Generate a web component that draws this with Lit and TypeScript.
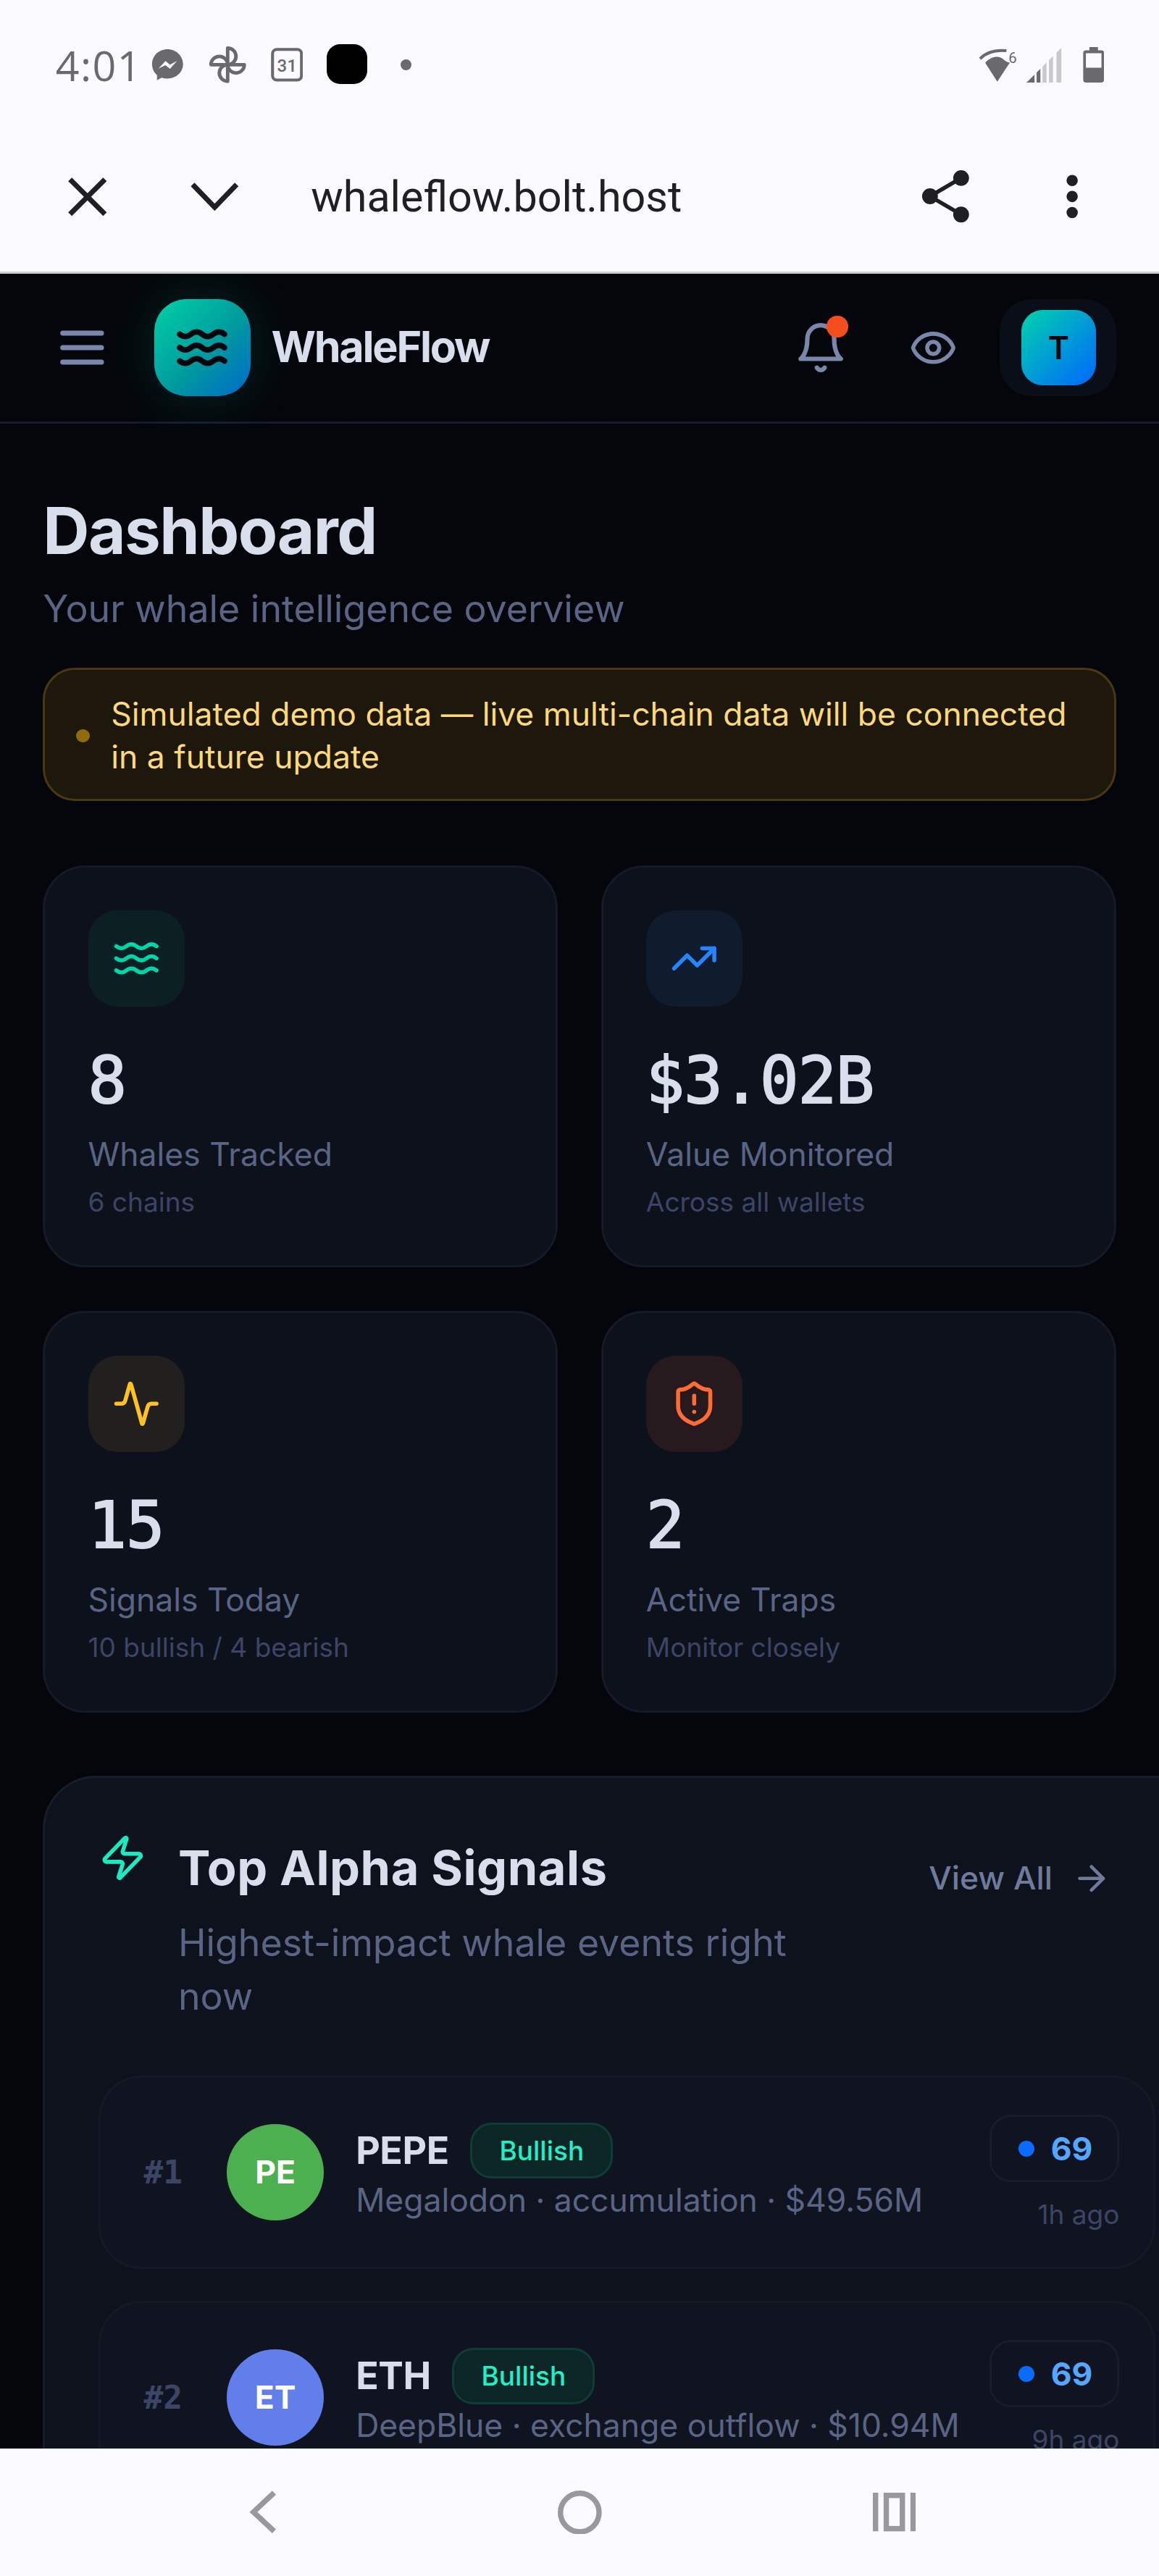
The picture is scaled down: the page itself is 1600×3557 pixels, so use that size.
import { LitElement, html, css, svg } from "lit";
import { customElement } from "lit/decorators.js";

const wavePaths = svg`
  <path d="M2 6c.6.5 1.2 1 2.5 1C7 7 7 5 9.5 5c2.6 0 2.4 2 5 2 2.5 0 2.5-2 5-2 1.3 0 1.9.5 2.5 1" />
  <path d="M2 12c.6.5 1.2 1 2.5 1 2.5 0 2.5-2 5-2 2.6 0 2.4 2 5 2 2.5 0 2.5-2 5-2 1.3 0 1.9.5 2.5 1" />
  <path d="M2 18c.6.5 1.2 1 2.5 1 2.5 0 2.5-2 5-2 2.6 0 2.4 2 5 2 2.5 0 2.5-2 5-2 1.3 0 1.9.5 2.5 1" />`;

const lucide = (size: number, body: unknown) => html`
  <svg class="lucide" width=${size} height=${size} viewBox="0 0 24 24">${body}</svg>`;

const stats = [
  {
    tone: "teal", value: "8", label: "Whales Tracked", sub: "6 chains",
    icon: wavePaths,
  },
  {
    tone: "blue", value: "$3.02B", label: "Value Monitored", sub: "Across all wallets",
    icon: svg`<path d="M22 7l-8.5 8.5-5-5L2 17" /><path d="M16 7h6v6" />`,
  },
  {
    tone: "amber", value: "15", label: "Signals Today", sub: "10 bullish / 4 bearish",
    icon: svg`<path d="M22 12h-2.48a2 2 0 0 0-1.93 1.46l-2.35 8.36a.25.25 0 0 1-.48 0L9.24 2.18a.25.25 0 0 0-.48 0l-2.35 8.36A2 2 0 0 1 4.49 12H2" />`,
  },
  {
    tone: "red", value: "2", label: "Active Traps", sub: "Monitor closely",
    icon: svg`<path d="M20 13c0 5-3.5 7.5-7.66 8.95a1 1 0 0 1-.67-.01C7.5 20.5 4 18 4 13V6a1 1 0 0 1 1-1c2 0 4.5-1.2 6.24-2.72a1.17 1.17 0 0 1 1.52 0C14.51 3.81 17 5 19 5a1 1 0 0 1 1 1z" /><path d="M12 8v4" /><path d="M12 16h.01" />`,
  },
];

const signals = [
  { rank: "#1", mark: "PE", coin: "pe", name: "PEPE", meta: "Megalodon · accumulation · $49.56M", score: "69", time: "1h ago" },
  { rank: "#2", mark: "ET", coin: "et", name: "ETH", meta: "DeepBlue · exchange outflow · $10.94M", score: "69", time: "9h ago" },
];

@customElement("app-root")
export class AppRoot extends LitElement {
  static styles = css`
    :host {
      display: block;
      width: 1600px;
      height: 3557px;
      overflow: hidden;
      background: #fbfaff;
    }
    * { box-sizing: border-box; }
    .page {
      zoom: 3.7037;
      width: 432px;
      height: 960.4px;
      display: flex;
      flex-direction: column;
      overflow: hidden;
      font-family: Inter, "Noto Sans", sans-serif;
      background: #fbfaff;
    }
    .lucide {
      display: block;
      flex: none;
      fill: none;
      stroke: currentColor;
      stroke-width: 2;
      stroke-linecap: round;
      stroke-linejoin: round;
    }

    /* phone chrome */
    .status {
      flex: none;
      height: 48.4px;
      padding: 0 20.4px 0 20.7px;
      display: flex;
      align-items: center;
      justify-content: space-between;
      color: #69696e;
    }
    .status-left, .status-right { display: flex; align-items: center; }
    .status-left { gap: 9px; }
    .status-right { gap: 3px; }
    .time {
      font-family: "Open Sans", Roboto, sans-serif;
      font-size: 15.5px;
      line-height: 20px;
      width: 30px;
      margin-right: -3.6px;
      letter-spacing: .4px;
    }
    .status svg { display: block; flex: none; }
    .blob { width: 15px; height: 15px; margin-top: -.5px; border-radius: 5px; background: #000; }
    .dot-small { width: 4px; height: 4px; border-radius: 50%; background: #69696e; margin-left: 3.5px; }
    .battery { margin-left: 4.5px; }

    .browser {
      flex: none;
      height: 53.6px;
      padding: 0 30.2px 3px 25px;
      display: flex;
      align-items: center;
      border-bottom: 1px solid #cfcfd2;
      color: #1f2024;
    }
    .browser svg { display: block; flex: none; }
    .url {
      font-family: Roboto, "Noto Sans", sans-serif;
      font-size: 16px;
      margin-left: 26.9px;
      flex: 1;
    }
    .chev { margin-left: 31px; }
    .kebab { margin-left: 36px; }

    .navbar {
      flex: none;
      height: 47.6px;
      display: flex;
      align-items: center;
      padding-left: 93px;
      color: #98989e;
    }
    .navbar svg { display: block; flex: none; }
    .nav-home { margin-left: 105px; }
    .nav-recent { margin-left: 101px; }

    /* app */
    .app {
      flex: 1;
      min-height: 0;
      overflow: hidden;
      background: #04060b;
      color: #d8deec;
    }
    .top {
      height: 56px;
      padding: 0 16px 0 22.4px;
      display: flex;
      align-items: center;
      border-bottom: 1px solid #161b2e;
    }
    .burger { color: #7b87a8; display: block; }
    .logo {
      width: 36px;
      height: 36px;
      margin-left: 18.6px;
      border-radius: 12px;
      background: linear-gradient(135deg, #00d2a6 0%, #009a9e 55%, #0068cc 100%);
      box-shadow: 0 0 20px rgba(0, 212, 170, .16);
      display: flex;
      align-items: center;
      justify-content: center;
      color: #05070d;
    }
    .logo .lucide { stroke-width: 2.5; }
    .brand {
      margin: -1px 0 0 7.7px;
      font-size: 16px;
      font-weight: 700;
      letter-spacing: -.6px;
      flex: 1;
    }
    .ico { color: #7b87a8; position: relative; }
    .bell { margin-right: 23px; }
    .badge {
      position: absolute;
      top: -1.8px;
      right: -.2px;
      width: 8px;
      height: 8px;
      border-radius: 50%;
      background: #f44e1f;
    }
    .eye { margin-right: 15.7px; }
    .me {
      width: 43.4px;
      height: 36px;
      padding-left: 8px;
      border-radius: 12px;
      background: #0a0e19;
      display: flex;
      align-items: center;
    }
    .me-face {
      width: 28px;
      height: 28px;
      border-radius: 8px;
      background: linear-gradient(135deg, #00d4aa, #0066ff);
      color: #05070d;
      font-size: 12px;
      font-weight: 600;
      display: flex;
      align-items: center;
      justify-content: center;
    }

    .main { padding: 24px 16px 0; }
    h1 {
      margin: 0;
      font-size: 24px;
      line-height: 32px;
      font-weight: 700;
      letter-spacing: -.4px;
    }
    .lead {
      margin: 3px 0 0;
      font-size: 14px;
      line-height: 20px;
      color: #5a6485;
    }
    .notice {
      margin-top: 12px;
      padding: 8.5px 11.6px 7.5px;
      display: flex;
      align-items: center;
      gap: 8px;
      border: 1px solid #4a3910;
      border-radius: 12px;
      background: #1e170c;
      color: #fcd97a;
      font-size: 12px;
      line-height: 16px;
    }
    .notice i {
      flex: none;
      width: 5px;
      height: 5px;
      border-radius: 50%;
      background: #8f6c0b;
    }

    .stats {
      margin-top: 24px;
      display: grid;
      grid-template-columns: 1fr 1fr;
      gap: 16px;
    }
    .stat {
      height: 150px;
      padding: 16px;
      border: 1px solid #151a2a;
      border-radius: 16px;
      background: #0c111b;
    }
    .tile {
      width: 36px;
      height: 36px;
      border-radius: 11px;
      display: flex;
      align-items: center;
      justify-content: center;
    }
    .teal { background: #0c2024; color: #00d4aa; }
    .blue { background: #0e1c2e; color: #2684ff; }
    .amber { background: #22201e; color: #ffc021; }
    .red { background: #261a1e; color: #ff6b35; }
    .value {
      margin-top: 11.4px;
      font-family: "DejaVu Sans Mono", "Liberation Mono", monospace;
      font-size: 24px;
      line-height: 32px;
      font-weight: 400;
      -webkit-text-stroke: .55px currentColor;
      letter-spacing: -.3px;
    }
    .label {
      margin-top: 3.8px;
      font-size: 12px;
      line-height: 16px;
      color: #5a6485;
    }
    .sub {
      margin-top: 2px;
      font-size: 10px;
      line-height: 15px;
      color: #3d4566;
    }

    .panel {
      margin-top: 23.4px;
      width: 435.5px;
      padding: 20px;
      border: 1px solid #171c2e;
      border-radius: 20px;
      background: #0d121c;
    }
    .panel-head { display: flex; align-items: flex-start; }
    .zap { color: #1de9c0; margin: .8px 11.6px 0 0; }
    .panel-text { width: 250px; }
    h2 {
      margin: -.6px 0 0;
      font-size: 18px;
      line-height: 28px;
      font-weight: 700;
      letter-spacing: .15px;
    }
    .panel-text p {
      margin: 4.2px 0 0;
      font-size: 14px;
      line-height: 20px;
      color: #5a6485;
    }
    .all {
      margin: 9.6px 0 0 auto;
      padding-right: 16.4px;
      display: flex;
      align-items: center;
      gap: 7px;
      font-size: 12px;
      line-height: 16px;
      font-weight: 500;
      color: #6f7a9c;
    }
    .rows {
      margin-top: 19.4px;
      display: flex;
      flex-direction: column;
      gap: 12px;
    }
    .row {
      height: 72px;
      padding: 0 12.6px 0 16px;
      display: flex;
      align-items: center;
      border: 1px solid #141927;
      border-radius: 16px;
      background: #0f1420;
    }
    .rank {
      width: 19px;
      flex: none;
      font-family: "DejaVu Sans Mono", "Liberation Mono", monospace;
      font-size: 12px;
      font-weight: 700;
      color: #3d4566;
    }
    .coin {
      flex: none;
      width: 36px;
      height: 36px;
      margin-left: 12px;
      border-radius: 50%;
      display: flex;
      align-items: center;
      justify-content: center;
      color: #fff;
      font-size: 12px;
      font-weight: 700;
    }
    .pe { background: #4caf50; }
    .et { background: #627eea; }
    .mid { flex: 1; min-width: 0; margin-left: 12px; }
    .mid-top { display: flex; align-items: center; gap: 8px; }
    .name { font-size: 14px; font-weight: 700; line-height: 21px; letter-spacing: -.1px; }
    .pill {
      height: 21px;
      padding: 0 10px;
      display: flex;
      align-items: center;
      border: 1px solid #103c38;
      border-radius: 8px;
      background: #0c2626;
      color: #20f0c8;
      font-size: 10px;
      font-weight: 500;
    }
    .meta {
      font-size: 12px;
      line-height: 16px;
      color: #5a6485;
      white-space: nowrap;
    }
    .side {
      flex: none;
      display: flex;
      flex-direction: column;
      align-items: flex-end;
      margin-top: 2px;
    }
    .score {
      width: 48.4px;
      height: 25px;
      padding-left: 10px;
      display: flex;
      align-items: center;
      gap: 6px;
      border: 1px solid #171d2e;
      border-radius: 8px;
      font-size: 12px;
      font-weight: 700;
      color: #55a6ff;
    }
    .score i { width: 6px; height: 6px; border-radius: 50%; background: #0a6cff; }
    .when {
      margin-top: 4.6px;
      font-size: 10px;
      line-height: 15px;
      color: #3d4566;
    }
  `;

  render() {
    return html`
      <div class="page">
        ${this.renderStatus()}
        <div class="app">
          <header class="top">
            <svg class="burger" width="16.4" height="14" viewBox="0 0 16.4 14" fill="none" stroke="currentColor" stroke-width="1.9" stroke-linecap="round">
              <path d="M1 1.600h14.400M1 7h14.400M1 12.400h14.400" />
            </svg>
            <div class="logo">${lucide(20, wavePaths)}</div>
            <div class="brand">WhaleFlow</div>
            <div class="ico bell">
              ${lucide(20, svg`<path d="M6 8a6 6 0 0 1 12 0c0 7 3 9 3 9H3s3-2 3-9" /><path d="M10.3 21a1.94 1.94 0 0 0 3.4 0" />`)}
              <span class="badge"></span>
            </div>
            <div class="ico eye">
              ${lucide(18, svg`<path d="M2.06 12.35a1 1 0 0 1 0-.7 10.75 10.75 0 0 1 19.88 0 1 1 0 0 1 0 .7 10.75 10.75 0 0 1-19.88 0" /><circle cx="12" cy="12" r="3" />`)}
            </div>
            <div class="me"><div class="me-face">T</div></div>
          </header>
          <main class="main">
            <h1>Dashboard</h1>
            <p class="lead">Your whale intelligence overview</p>
            <div class="notice">
              <i></i>
              <span>Simulated demo data — live multi-chain data will be connected in a future update</span>
            </div>
            <section class="stats">
              ${stats.map(
                (s) => html`
                  <article class="stat">
                    <div class="tile ${s.tone}">${lucide(18, s.icon)}</div>
                    <div class="value">${s.value}</div>
                    <div class="label">${s.label}</div>
                    <div class="sub">${s.sub}</div>
                  </article>
                `
              )}
            </section>
            <section class="panel">
              <div class="panel-head">
                <div class="zap">
                  ${lucide(18, svg`<path d="M4 14a1 1 0 0 1-.78-1.63l9.9-10.2a.5.5 0 0 1 .86.46l-1.92 6.02A1 1 0 0 0 13 10h7a1 1 0 0 1 .78 1.63l-9.9 10.2a.5.5 0 0 1-.86-.46l1.92-6.02A1 1 0 0 0 11 14z" />`)}
                </div>
                <div class="panel-text">
                  <h2>Top Alpha Signals</h2>
                  <p>Highest-impact whale events right now</p>
                </div>
                <div class="all">
                  View All
                  ${lucide(15, svg`<path d="M5 12h14" /><path d="m12 5 7 7-7 7" />`)}
                </div>
              </div>
              <div class="rows">
                ${signals.map(
                  (r) => html`
                    <div class="row">
                      <div class="rank">${r.rank}</div>
                      <div class="coin ${r.coin}">${r.mark}</div>
                      <div class="mid">
                        <div class="mid-top">
                          <span class="name">${r.name}</span>
                          <span class="pill">Bullish</span>
                        </div>
                        <div class="meta">${r.meta}</div>
                      </div>
                      <div class="side">
                        <div class="score"><i></i>${r.score}</div>
                        <div class="when">${r.time}</div>
                      </div>
                    </div>
                  `
                )}
              </div>
            </section>
          </main>
        </div>
        ${this.renderNav()}
      </div>
    `;
  }

  renderStatus() {
    return html`
      <div class="status">
        <div class="status-left">
          <span class="time">4:01</span>
          <svg width="12.6" height="12.6" viewBox="0 0 24 24">
            <path fill="#69696e" d="M12 1C5.800 1 1 5.500 1 11.600c0 3.200 1.300 5.900 3.500 7.800V23l3.300-1.800c1.300.4 2.700.6 4.200.6 6.200 0 11-4.500 11-10.200S18.200 1 12 1z" />
            <path fill="#fbfaff" d="M5.500 14.800l5-5.400 3.200 2.600 5-2.600-5 5.500-3.200-2.600z" />
          </svg>
          <svg width="14.200" height="14.200" viewBox="0 0 24 24" fill="none" stroke="#69696e" stroke-width="2.200" stroke-linejoin="round">
            <path d="M12 12V1.500a5.250 5.250 0 0 1 0 10.500z" />
            <path d="M12 12h10.500a5.250 5.250 0 0 1-10.500 0z" />
            <path d="M12 12v10.500a5.250 5.250 0 0 1 0-10.500z" />
            <path d="M12 12H1.500a5.250 5.250 0 0 1 10.500 0z" />
          </svg>
          <svg width="12" height="12.6" viewBox="0 0 12 12.6">
            <rect x=".6" y=".6" width="10.8" height="11.4" rx="1.600" fill="none" stroke="#69696e" stroke-width="1.100" />
            <text x="6" y="8.800" text-anchor="middle" font-family="Roboto, sans-serif" font-size="6.500" font-weight="500" fill="#69696e">31</text>
          </svg>
          <div class="blob"></div>
          <div class="dot-small"></div>
        </div>
        <div class="status-right">
          <svg width="15.600" height="13" viewBox="0 0 15 13">
            <path fill="#69696e" d="M7.200 12.600 2.700 5.600c1.300-1.500 2.800-2.200 4.500-2.200 1 0 1.800.5 2.500 1.100.6.500 1.400.9 2.200 1z" />
            <path fill="none" stroke="#69696e" stroke-width="1.100" d="M.8 4.100C3 1.700 6 .7 10.600 1.100" />
            <text x="11.400" y="5.600" font-family="Roboto, sans-serif" font-size="5.500" fill="#69696e">6</text>
          </svg>
          <svg width="13.400" height="13" viewBox="0 0 13.400 13">
            <path fill="#69696e" d="M0 13 3 10v3zM3.800 9.200 5.200 7.800V13H3.800z" />
            <path fill="#c9c9cd" d="M6 7 7.500 5.500V13H6zM8.400 4.600 9.900 3.100V13H8.400zM11.200 1.800 13 0V13H11.200z" />
          </svg>
          <svg class="battery" width="8" height="13.200" viewBox="0 0 8 13.200">
            <path fill="#69696e" d="M2.400 0h3.200v1.200h1.300a1 1 0 0 1 1 1V12.200a1 1 0 0 1-1 1H1.100a1 1 0 0 1-1-1V2.200a1 1 0 0 1 1-1h1.300z" />
            <rect x="1.100" y="2.300" width="5.800" height="5.400" fill="#fbfaff" />
          </svg>
        </div>
      </div>
      <div class="browser">
        <svg width="15" height="15" viewBox="0 0 15 15" fill="none" stroke="currentColor" stroke-width="1.900">
          <path d="M1 1l13 13M14 1 1 14" />
        </svg>
        <svg class="chev" width="18" height="11" viewBox="0 0 18 11" fill="none" stroke="currentColor" stroke-width="1.900">
          <path d="M.8 1 9 9.500 17.200 1" />
        </svg>
        <span class="url">whaleflow.bolt.host</span>
        <svg width="18" height="20" viewBox="0 0 18 20" fill="currentColor" stroke="currentColor" stroke-width="1.500">
          <path fill="none" d="M14.800 3.200 3.200 10l11.600 6.800" />
          <circle cx="14.800" cy="3.200" r="2.200" />
          <circle cx="3.200" cy="10" r="2.200" />
          <circle cx="14.800" cy="16.800" r="2.200" />
        </svg>
        <svg class="kebab" width="4.400" height="16.400" viewBox="0 0 4.400 16.400" fill="currentColor">
          <circle cx="2.200" cy="2.200" r="2.100" />
          <circle cx="2.200" cy="8.200" r="2.100" />
          <circle cx="2.200" cy="14.200" r="2.100" />
        </svg>
      </div>
    `;
  }

  renderNav() {
    return html`
      <div class="navbar">
        <svg width="10" height="16" viewBox="0 0 10 16" fill="none" stroke="currentColor" stroke-width="2">
          <path d="M9.300 .8 1.600 8l7.700 7.200" />
        </svg>
        <svg class="nav-home" width="16.400" height="16.400" viewBox="0 0 16.400 16.400" fill="none" stroke="currentColor" stroke-width="2">
          <circle cx="8.200" cy="8.200" r="7.200" />
        </svg>
        <svg class="nav-recent" width="16" height="14.400" viewBox="0 0 16 14.400" fill="none" stroke="currentColor" stroke-width="2">
          <path d="M1 0v14.400M15 0v14.400" />
          <rect x="5" y="1" width="6" height="12.400" />
        </svg>
      </div>
    `;
  }
}
